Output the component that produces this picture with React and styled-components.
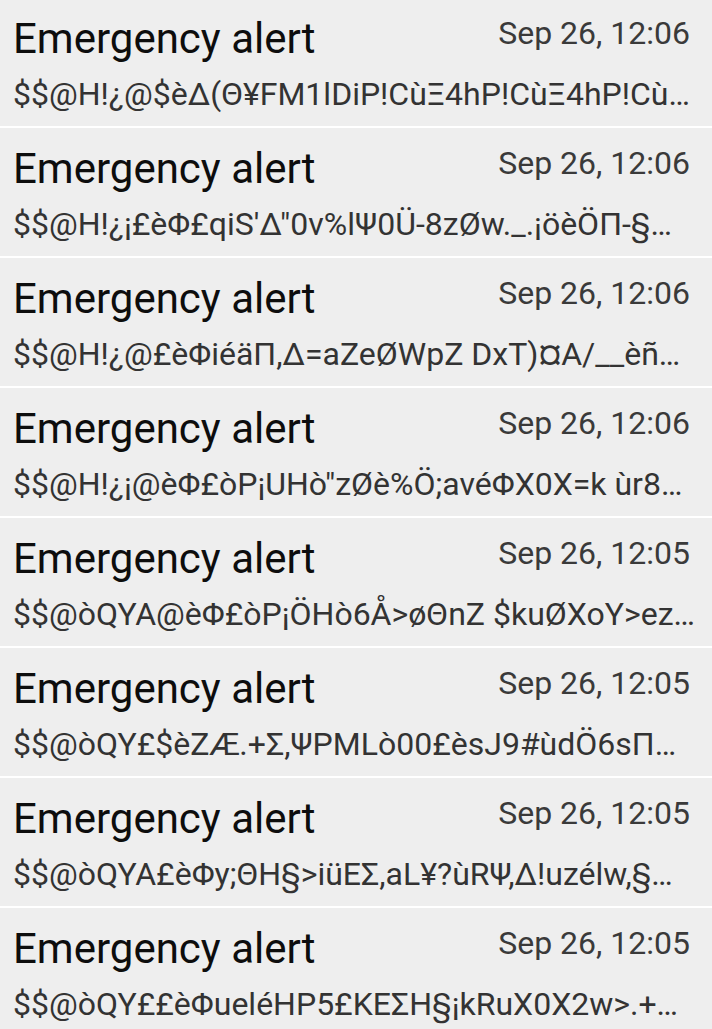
import React from 'react';
import styled, { createGlobalStyle } from 'styled-components';

const GlobalStyle = createGlobalStyle`
  html, body {
    margin: 0;
    padding: 0;
    background: #eeeeee;
  }
  body {
    font-family: Roboto, "Noto Sans", "Liberation Sans", sans-serif;
  }
`;

const List = styled.div`
  display: flex;
  flex-direction: column;
  margin-top: -2px;
  background: #eeeeee;
`;

const Row = styled.div`
  box-sizing: border-box;
  height: 130px;
  padding: 15px 15px 0 13px;
  border-bottom: 2px solid #ffffff;
  display: flex;
  flex-direction: column;
`;

const Header = styled.div`
  display: flex;
  justify-content: space-between;
  align-items: flex-start;
`;

const Title = styled.div`
  margin-top: 2px;
  font-size: 42px;
  line-height: 48px;
  color: #0d0d0d;
`;

const Time = styled.div`
  margin-right: 7px;
  font-size: 32px;
  line-height: 40px;
  color: #3a3a3a;
`;

const Body = styled.div`
  margin-top: 11px;
  font-size: 32px;
  line-height: 40px;
  color: #333333;
  white-space: nowrap;
`;

// previews as the list shows them, already shortened with an ellipsis
const alerts = [
  { time: 'Sep 26, 12:06', text: '$$@H!¿@$èΔ(Θ¥FM1lDiP!CùΞ4hP!CùΞ4hP!Cù…' },
  { time: 'Sep 26, 12:06', text: '$$@H!¿¡£èΦ£qiS\'Δ"0v%lΨ0Ü-8zØw._.¡öèÖΠ-§…' },
  { time: 'Sep 26, 12:06', text: '$$@H!¿@£èΦiéäΠ,Δ=aZeØWpZ DxT)¤A/__èñ…' },
  { time: 'Sep 26, 12:06', text: '$$@H!¿¡@èΦ£òP¡UHò"zØè%Ö;avéΦX0X=k ùr8…' },
  { time: 'Sep 26, 12:05', text: '$$@òQYA@èΦ£òP¡ÖHò6Å>øΘnZ $kuØXoY>ez…' },
  { time: 'Sep 26, 12:05', text: '$$@òQY£$èZÆ.+Σ,ΨPMLò00£èsJ9#ùdÖ6sΠ…' },
  { time: 'Sep 26, 12:05', text: '$$@òQYA£èΦy;ΘH§>iüEΣ,aL¥?ùRΨ,Δ!uzélw,§…' },
  { time: 'Sep 26, 12:05', text: '$$@òQY££èΦueléHP5£KEΣH§¡kRuX0X2w>.+…' },
];

const App = () => {
  return (
    <>
      <GlobalStyle />
      <List>
        {alerts.map((a, i) => (
          <Row key={i}>
            <Header>
              <Title>Emergency alert</Title>
              <Time>{a.time}</Time>
            </Header>
            <Body>{a.text}</Body>
          </Row>
        ))}
      </List>
    </>
  );
};

export default App;
